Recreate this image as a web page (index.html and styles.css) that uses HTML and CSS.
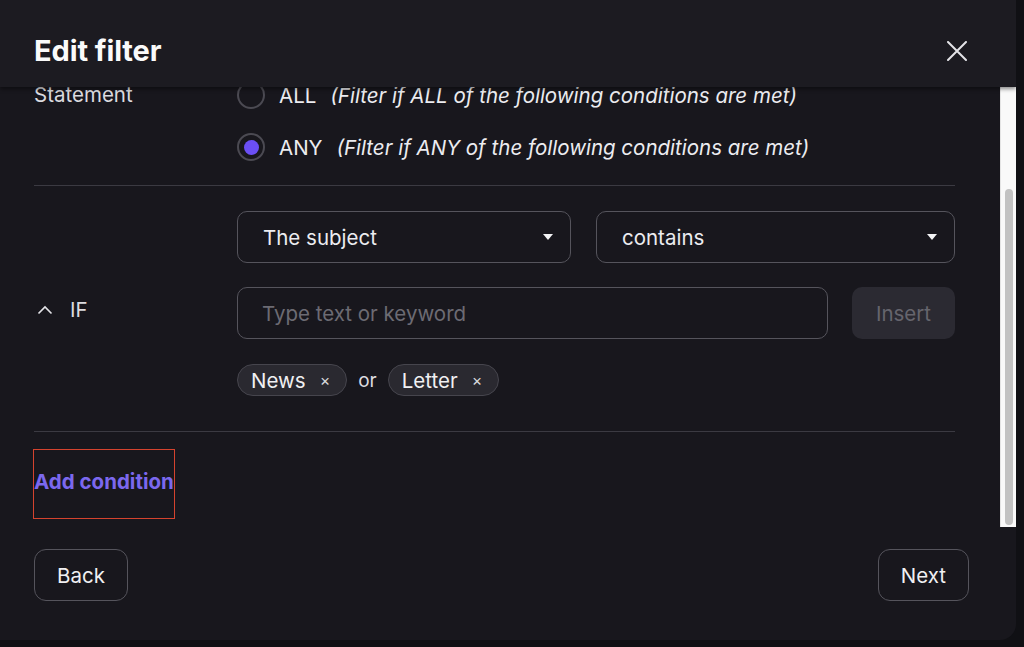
FILE: index.html
```html
<!DOCTYPE html>
<html lang="en">
<head>
    <meta charset="UTF-8">
    <meta name="viewport" content="width=device-width, initial-scale=1.0">
    <title>Edit filter</title>
    <link rel="stylesheet" href="styles.css">
</head>
<body>
<div class="modal">
    <header class="modal-header">
        <h1>Edit filter</h1>
        <button class="close-button" aria-label="Close">
            <svg width="20" height="20" viewBox="0 0 20 20"><path d="M1 1L19 19M19 1L1 19" stroke="#e4e4e8" stroke-width="2" stroke-linecap="round"/></svg>
        </button>
    </header>

    <div class="body-wrap">
        <div class="modal-body" id="modal-body">
            <div class="section">
                <div class="section-label">Name</div>
                <div class="section-content">
                    <input class="text-field" type="text" value="Newsletters">
                </div>
            </div>

            <div class="section statement">
                <div class="section-label">Statement</div>
                <div class="radio-list">
                    <label class="radio-row">
                        <span class="radio"></span>
                        <span class="radio-text">ALL</span>
                        <em>(Filter if ALL of the following conditions are met)</em>
                    </label>
                    <label class="radio-row">
                        <span class="radio checked"></span>
                        <span class="radio-text">ANY</span>
                        <em>(Filter if ANY of the following conditions are met)</em>
                    </label>
                </div>
            </div>

            <div class="section condition">
                <div class="section-label toggle">
                    <svg width="16" height="10" viewBox="0 0 16 10"><path d="M1.5 8.5L8 2L14.5 8.5" fill="none" stroke="#e4e4e8" stroke-width="1.6"/></svg>
                    IF
                </div>
                <div class="condition-fields">
                    <div class="select-row">
                        <div class="select">The subject <span class="caret"></span></div>
                        <div class="select">contains <span class="caret"></span></div>
                    </div>
                    <div class="input-row">
                        <input class="text-field" type="text" placeholder="Type text or keyword">
                        <button class="insert-button" disabled>Insert</button>
                    </div>
                    <div class="chips">
                        <span class="chip">News <span class="chip-x">&times;</span></span>
                        <span class="chip-or">or</span>
                        <span class="chip">Letter <span class="chip-x">&times;</span></span>
                    </div>
                </div>
            </div>

            <button class="add-condition">Add condition</button>
        </div>
        <div class="scrollbar"><div class="scrollbar-thumb"></div></div>
    </div>

    <footer class="modal-footer">
        <button class="outline-button">Back</button>
        <button class="outline-button">Next</button>
    </footer>
</div>

<script>
    // la liste est défilée jusqu'en bas
    const body = document.getElementById("modal-body");
    body.scrollTop = body.scrollHeight;
</script>
</body>
</html>
```

FILE: styles.css
```css
/* Global Styles */
body {
    margin: 0;
    background-color: #101014;
    font-family: 'Inter', 'Noto Sans', sans-serif;
    color: #ececf0;
    overflow: hidden;
}

button, input {
    font-family: inherit;
}

.modal {
    width: 1016px;
    height: 640px;
    background-color: #18171d;
    border-radius: 0 0 16px 0;
    display: flex;
    flex-direction: column;
    overflow: hidden;
}

/* Header */
.modal-header {
    position: relative;
    z-index: 1;
    height: 87px;
    flex-shrink: 0;
    display: flex;
    align-items: center;
    justify-content: space-between;
    padding: 14px 49px 0 34px;
    background-color: #1c1b21;
    box-shadow: 0 2px 4px rgba(0, 0, 0, 0.45);
    box-sizing: border-box;
}

.modal-header h1 {
    margin: 0;
    font-size: 29px;
    font-weight: 700;
    color: #fafafa;
    letter-spacing: -0.1px;
}

.close-button {
    background: none;
    border: none;
    padding: 0;
    display: flex;
    cursor: pointer;
}

/* Body */
.body-wrap {
    display: flex;
    height: 440px;
    flex-shrink: 0;
}

.modal-body {
    flex: 1;
    overflow: hidden;
    padding: 8px 45px 8px 34px;
    box-sizing: border-box;
}

.scrollbar {
    width: 16px;
    box-sizing: border-box;
    background-color: #f9f9f9;
    border-left: 1px solid #e4e4e4;
    padding: 102px 3px 2px 4px;
    display: flex;
    flex-direction: column;
}

.scrollbar-thumb {
    flex: 1;
    background-color: #c2c2c2;
    border-radius: 5px;
}

.section {
    display: grid;
    grid-template-columns: 203px 1fr;
    padding: 24px 0;
    border-bottom: 1px solid #3b3a42;
    font-size: 20.5px;
}

.section-label {
    color: #dcdce0;
    line-height: 28px;
}

.text-field {
    width: 100%;
    height: 52px;
    box-sizing: border-box;
    padding: 0 24px;
    background-color: transparent;
    border: 1.5px solid #55545c;
    border-radius: 10px;
    color: #ececf0;
    font-size: 20.5px;
    outline: none;
}

.text-field::placeholder {
    color: #6c6b73;
}

/* Statement */
.statement {
    padding: 23px 0 24px;
}

.radio-list {
    display: flex;
    flex-direction: column;
    gap: 24px;
}

.radio-row {
    display: flex;
    align-items: center;
    height: 28px;
    color: #ececf0;
}

.radio {
    width: 28px;
    height: 28px;
    box-sizing: border-box;
    border: 2px solid #4b4a52;
    border-radius: 50%;
    margin-right: 14px;
    display: flex;
    align-items: center;
    justify-content: center;
}

.radio.checked::after {
    content: "";
    width: 15px;
    height: 15px;
    border-radius: 50%;
    background-color: #6b4ff5;
}

.radio-row em {
    margin-left: 14px;
}

/* Condition */
.condition {
    padding: 25px 0 35px;
}

.toggle {
    align-self: center;
    display: flex;
    align-items: center;
    gap: 17px;
    padding: 12px 0 0 3px;
}

.condition-fields {
    display: flex;
    flex-direction: column;
    gap: 24px;
}

.select-row {
    display: grid;
    grid-template-columns: 334px 1fr;
    gap: 25px;
}

.select {
    height: 52px;
    box-sizing: border-box;
    display: flex;
    align-items: center;
    justify-content: space-between;
    padding: 0 17px 0 25px;
    border: 1.5px solid #55545c;
    border-radius: 10px;
}

.caret {
    width: 0;
    height: 0;
    border-left: 5px solid transparent;
    border-right: 5px solid transparent;
    border-top: 6px solid #f4f4f6;
}

.input-row {
    display: flex;
    gap: 24px;
}

.insert-button {
    flex-shrink: 0;
    width: 103px;
    height: 52px;
    border: none;
    border-radius: 10px;
    background-color: #2b2a32;
    color: #66656d;
    font-size: 20.5px;
}

.chips {
    display: flex;
    align-items: center;
    gap: 11px;
    margin-top: 1px;
}

.chip {
    display: flex;
    align-items: center;
    height: 32px;
    box-sizing: border-box;
    padding: 0 16px 0 13px;
    border: 1px solid #46454d;
    border-radius: 16px;
    background-color: #2a2930;
    color: #f0f0f2;
}

.chip-x {
    margin-left: 14px;
    font-size: 16px;
    color: #d8d8dc;
}

.chip-or {
    color: #dcdce0;
    font-size: 19px;
}

/* Add condition */
.add-condition {
    align-self: flex-start;
    margin: 17px 0 0 -1px;
    padding: 20px 0 24px;
    background: none;
    border: 1px solid #d4432e;
    color: #7b68ee;
    font-size: 20.5px;
    font-weight: 700;
    line-height: 24px;
    cursor: pointer;
}

/* Footer */
.modal-footer {
    display: flex;
    justify-content: space-between;
    padding: 22px 47px 0 34px;
}

.outline-button {
    height: 52px;
    padding: 0 22px;
    background: none;
    border: 1.5px solid #55545c;
    border-radius: 12px;
    color: #f0f0f2;
    font-size: 20.5px;
    cursor: pointer;
}
```
